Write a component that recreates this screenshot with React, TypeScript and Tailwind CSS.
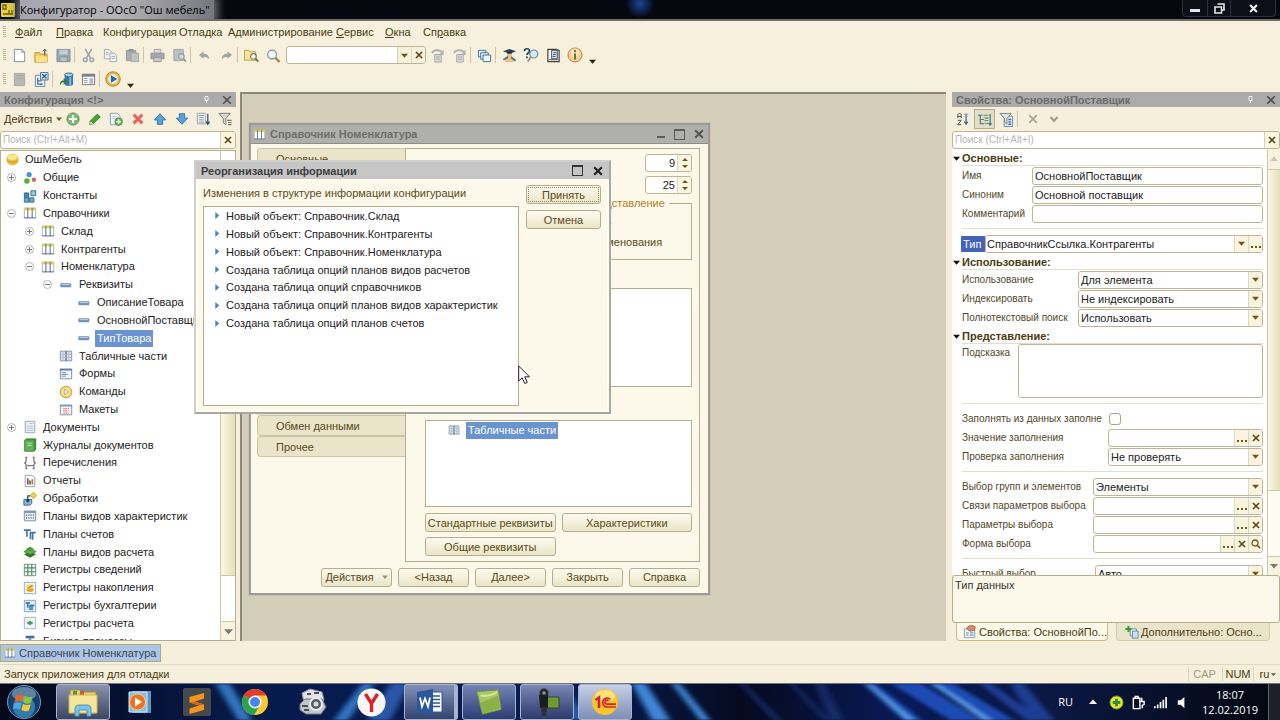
import React from 'react';

type Kids = { children?: React.ReactNode };

function Svg({ s = 16, vb = '0 0 16 16', children }: { s?: number; vb?: string } & Kids) {
  return (
    <svg width={s} height={s} viewBox={vb} fill="none" aria-hidden="true" className="shrink-0">
      {children}
    </svg>
  );
}

const Cross = ({ c = '#5a4a12', s = 9, w = 2 }: { c?: string; s?: number; w?: number }) => (
  <Svg s={s} vb="0 0 10 10">
    <path d="M1.2 1.2 8.8 8.8M8.8 1.2 1.2 8.8" stroke={c} strokeWidth={w} />
  </Svg>
);
const Down = ({ c = '#6b5a14', s = 7 }: { c?: string; s?: number }) => (
  <Svg s={s} vb="0 0 8 8">
    <path d="M0 2h8L4 6.500z" fill={c} />
  </Svg>
);

const catalog = (
  <>
    <path d="M1.500 2.500h13v11h-13z" fill="#fff" stroke="#a3abb5" />
    <path d="M1 2h14v3H1z" fill="#d9cf58" />
    <path d="M5.500 2v12M10.500 2v12" stroke="#6c7f9c" strokeWidth="1.300" />
    <path d="M1 13.500h14" stroke="#6c7f9c" />
  </>
);

const icons: Record<string, React.ReactNode> = {
  newDoc: <path d="M2.500 1.500h8l3 3v10h-11zM10.500 1.500v3h3" fill="#fff" stroke="#7d8ea6" />,
  open: (
    <>
      <path d="M1 5h5l1 1.500h7V15H1z" fill="#f2cf5b" stroke="#b98f2b" />
      <path d="M2 9h12v6H2z" fill="#fae28c" />
      <path d="M11.500 8V1.500M9.500 3.500l2-2.200 2 2.200" stroke="#33363c" />
    </>
  ),
  save: (
    <>
      <path d="M1 1.500h14v13H1z" fill="#9ba7ae" stroke="#8594a0" />
      <path d="M3.500 2h9v5h-9z" fill="#c4cdcf" />
      <path d="M4 9.500h8v5H4z" fill="#b8c0bd" stroke="#8594a0" />
    </>
  ),
  cut: (
    <>
      <path d="M4.500 1 10 10.500M11.500 1 6 10.500" stroke="#97a0aa" strokeWidth="1.600" />
      <circle cx="4.500" cy="12.500" r="2" stroke="#97a0aa" strokeWidth="1.500" />
      <circle cx="11.500" cy="12.500" r="2" stroke="#97a0aa" strokeWidth="1.500" />
    </>
  ),
  copy: (
    <>
      <path d="M1.500 1.500h5l2 2v8h-7z" fill="#f4f4ee" stroke="#a0acba" />
      <path d="M7.500 5.500h4.500l2.500 2.500v6.500h-7z" fill="#f4f4ee" stroke="#a0acba" />
      <path d="M3 5h3M3 7h3M9 9h4M9 11h4" stroke="#a0acba" />
    </>
  ),
  paste: (
    <>
      <path d="M1.500 2.500h10v11h-10z" fill="#a9afb1" stroke="#929a9f" />
      <path d="M4 1h5v3H4z" fill="#8b959c" />
      <path d="M6.500 5.500h8v9h-8z" fill="#bfc4c3" stroke="#a0a8ab" />
    </>
  ),
  print: (
    <>
      <path d="M4.500 1.500h7v4h-7z" fill="#ddd" stroke="#a2a6a8" />
      <path d="M1 5.500h14v6H1z" fill="#a5a8aa" stroke="#8f9498" />
      <path d="M4 10h8v4.500H4z" fill="#c9c9c4" stroke="#999" />
    </>
  ),
  preview: (
    <>
      <path d="M2 1.500h10v12H2z" fill="#bbc2c4" stroke="#a0a8ab" />
      <circle cx="10" cy="9" r="3" fill="#d3d8d8" stroke="#929a9f" strokeWidth="1.200" />
      <path d="m12 11.500 3 3" stroke="#929a9f" strokeWidth="2" />
    </>
  ),
  undo: <path d="M2 7.500 7 3.500v2.500c4 0 6 2 6 6-1.500-2-3-2.500-6-2.500v2z" fill="#a4a69e" />,
  redo: <path d="M14 7.500 9 3.500v2.500c-4 0-6 2-6 6 1.500-2 3-2.500 6-2.500v2z" fill="#a4a69e" />,
  findFolder: (
    <>
      <path d="M.5 2.500h5l1 1.500h6v9H.5z" fill="#f7e59a" stroke="#b9a14c" />
      <circle cx="10" cy="9" r="3" fill="#fff" stroke="#806f48" strokeWidth="1.200" />
      <path d="m12.200 11.200 3 3.300" stroke="#806f48" strokeWidth="2" />
    </>
  ),
  find: (
    <>
      <circle cx="6.500" cy="7" r="4.700" fill="#f5f8fc" stroke="#8493aa" strokeWidth="1.400" />
      <path d="m10 10.500 4.500 4.500" stroke="#a8793e" strokeWidth="2.200" />
    </>
  ),
  jump: (
    <>
      <path d="M2 5.500c2-4 8-4 11-1" stroke="#b2b4b1" strokeWidth="2" />
      <path d="M14.500 1.500v6h-5z" fill="#b2b4b1" />
      <path d="M5 7h7v8H5z" fill="#d6d7d3" stroke="#a9adae" />
      <path d="M6.500 9.500h4M6.500 12h4" stroke="#a9adae" />
    </>
  ),
  windows: (
    <>
      <path d="M1.500 2.500h8v7h-8z" fill="#dfeef6" stroke="#3f7193" />
      <path d="M4 5h8v7H4z" fill="#dfeef6" stroke="#3f7193" />
      <path d="M6.500 7.500h8v7h-8z" fill="#f1f8fc" stroke="#3f7193" />
    </>
  ),
  graduate: (
    <>
      <path d="M1 3.500 8 1l7 2.500L8 6z" fill="#26435c" />
      <circle cx="8" cy="6.800" r="2.800" fill="#f0bd8c" />
      <path d="M5 4h6l-1 2H6z" fill="#1c2c3c" />
      <path d="M3 15c0-3 2-5 5-5s5 2 5 5z" fill="#f1c277" />
      <path d="m1.500 12.500 5-3M9.500 9.500l5 4" stroke="#4a7398" strokeWidth="2" />
    </>
  ),
  helpFind: (
    <>
      <path d="M1.500 4c0-3 5-3 5 0 0 2-2.500 2-2.500 4M4 9.500v1.800" stroke="#23425f" strokeWidth="1.700" />
      <circle cx="10.800" cy="7" r="4" fill="#d6e9f3" stroke="#6d8ba0" strokeWidth="1.200" />
      <path d="m7.800 10-3 4.500" stroke="#9a9186" strokeWidth="2" />
    </>
  ),
  book: (
    <>
      <path d="M2 1.500h9l3 1v12H2z" fill="#fdf9e8" stroke="#4c423a" strokeWidth="1.300" />
      <path d="M6 2.500h6v9H6z" fill="#d6e4f2" stroke="#34506b" />
      <path d="M8 5h3M7.500 7h3M7 9h3M3 12.500h10" stroke="#34506b" />
    </>
  ),
  info: (
    <>
      <circle cx="8" cy="8" r="7" fill="#f6cf8e" stroke="#b87f50" />
      <circle cx="8" cy="6" r="4.500" fill="#fbe3ba" />
      <path d="M8 6.500v6" stroke="#5c7a2a" strokeWidth="2" />
      <circle cx="8" cy="4" r="1.200" fill="#5c7a2a" />
    </>
  ),
  grayBox: (
    <>
      <path d="M2.500 1.500h11v13h-11z" fill="#b9b9b3" stroke="#a9aba6" />
      <path d="M4 4h8M4 7h8" stroke="#a3a5a0" />
    </>
  ),
  tree: (
    <>
      <path d="M1.500 3.500h10v12h-10z" fill="#eef3f8" stroke="#6b88a8" />
      <path d="M7 .5h8v8H7z" fill="#cfe3f3" stroke="#41749c" />
      <path d="m8.800 2.300 4.500 4.500m0-4.500L8.800 6.800" stroke="#23557e" strokeWidth="1.400" />
      <path d="M4 6v7h4M4 9.500h4" stroke="#3c6fa0" strokeWidth="1.300" />
      <path d="M7 12h2v2H7z" fill="#3c6fa0" />
    </>
  ),
  database: (
    <>
      <path d="M6 3v10c0 2.400 9 2.400 9 0V3z" fill="#3a78aa" />
      <ellipse cx="10.500" cy="3" rx="4.500" ry="2" fill="#a6d0e8" stroke="#2e6690" />
      <path d="M12 5v9.500" stroke="#82b6d8" strokeWidth="2" />
      <path d="M1 15c0-5 1-6 4-6V6.500L9 10l-4 3.500V11c-2 0-3 1-4 4z" fill="#2f7d32" />
    </>
  ),
  form: (
    <>
      <path d="M1.500 2.500h13v11h-13z" fill="#fff" stroke="#6f7680" />
      <path d="M1 2h14v3H1z" fill="#7a828c" />
      <path d="M3 7h4M3 9h4M3 11h4" stroke="#8b929c" />
      <path d="M9 6.500h4v6H9z" fill="#aeb9c8" />
    </>
  ),
  play: (
    <>
      <circle cx="8" cy="8" r="7.200" fill="#efb63a" stroke="#b48522" />
      <circle cx="8" cy="8" r="5" fill="#dcebf4" />
      <path d="M6 4.200v7.600L12.300 8z" fill="#2c6a97" />
    </>
  ),
  add: (
    <>
      <circle cx="8" cy="8" r="7" fill="#7cbd72" stroke="#5b8e58" />
      <path d="M8 3.500v9M3.500 8h9" stroke="#fff" strokeWidth="2.400" />
    </>
  ),
  pencil: (
    <>
      <path d="m2.500 10.500 8-8 3.500 3-8 8-4 .7z" fill="#3fa535" stroke="#247e1d" />
      <path d="m3 10.500 3 3-4 .8z" fill="#f0d9a8" />
    </>
  ),
  addDoc: (
    <>
      <path d="M1.500 1.500h8l3 3v10h-11z" fill="#f4f8fb" stroke="#7d97b0" />
      <path d="M3.500 5h6M3.500 7.500h4" stroke="#a9bccd" />
      <circle cx="11" cy="11" r="4.300" fill="#70b567" stroke="#4c8a48" />
      <path d="M11 8.500v5M8.500 11h5" stroke="#fff" strokeWidth="1.500" />
    </>
  ),
  del: <path d="m3 3 10 10M13 3 3 13" stroke="#e8635a" strokeWidth="3.400" />,
  up: <path d="M8 2 14.500 9H11v5H5V9H1.500z" fill="#57a3e0" stroke="#2f6ea8" />,
  down: <path d="M8 14 1.500 7H5V2h6v5h3.500z" fill="#57a3e0" stroke="#2f6ea8" />,
  sort: (
    <>
      <path d="M1.500 1.500h9v12h-9z" fill="#fff" stroke="#8799b0" />
      <path d="M3 4h6M3 6.500h6M3 9h6M3 11.500h6" stroke="#6c7c93" />
      <path d="M13.500 2v11M11.500 11l2 3 2-3" stroke="#20407a" strokeWidth="1.300" />
    </>
  ),
  filter: (
    <>
      <path d="M1 1.500h13L9 7.500v7l-3-2V7.500z" fill="#d7d7d0" stroke="#76766e" />
      <path d="M10.500 9.500h5M11.500 12h4M11.500 14.500h4" stroke="#76766e" strokeWidth="1.300" />
    </>
  ),
  root: (
    <>
      <circle cx="8" cy="8" r="6.500" fill="#f0bd35" />
      <ellipse cx="8" cy="5.500" rx="5" ry="3.200" fill="#fbe78e" />
      <path d="M2 9.500c2 1.500 10 1.500 12 0" stroke="#c9902a" />
    </>
  ),
  common: (
    <>
      <circle cx="7" cy="4" r="3" fill="#4b94d6" />
      <circle cx="4.500" cy="11.500" r="3.200" fill="#5cae3c" />
      <circle cx="12.500" cy="10" r="2.600" fill="#c0726a" />
    </>
  ),
  constants: (
    <>
      <path d="M1.500 4.500h5v5h-5z" fill="#4686b5" stroke="#2e6489" />
      <path d="M1.500 10h5v5h-5zM7.500 10h5v5h-5z" fill="#71a9cf" stroke="#2e6489" />
      <path d="M9 2h5.500v5.500H9z" fill="#9cc8e3" stroke="#2e6489" />
    </>
  ),
  catalog,
  attr: (
    <>
      <rect x="1.500" y="6" width="12.500" height="4.500" rx="1" fill="#6f93ba" />
      <path d="M3 7.500h9.500" stroke="#c6d8ea" />
    </>
  ),
  tabular: (
    <>
      <path d="M1.500 2.500h13v11h-13z" fill="#dfe6f0" stroke="#7e8897" />
      <path d="M8 2.500v11" stroke="#56657c" strokeWidth="1.500" />
      <path d="M4.700 3v10M11.300 3v10M2 6h12M2 9.500h12" stroke="#aeb9c9" />
    </>
  ),
  forms: (
    <>
      <path d="M1.500 2.500h13v11h-13z" fill="#eef3f9" stroke="#71839c" />
      <path d="M1 2h14v2H1z" fill="#5d7da6" />
      <path d="M3 6.500h5M3 8.500h7M3 10.500h5" stroke="#70839d" />
    </>
  ),
  command: (
    <>
      <circle cx="8" cy="8" r="6.700" fill="#f3d472" stroke="#c09a33" />
      <circle cx="8" cy="8" r="4.500" fill="#f8e8b0" />
      <path d="M6.200 4.700v6.600L11.500 8z" fill="#fffbe8" stroke="#d6aa3e" />
    </>
  ),
  layout: (
    <>
      <path d="M1.500 2.500h13v11h-13z" fill="#f4f6fa" stroke="#7b8a9f" />
      <path d="M1 2h14v2H1z" fill="#7d9bc2" />
      <path d="M5 6.500h6M5 9h6M5 11.500h6" stroke="#d96a62" strokeDasharray="1.500 1" strokeWidth="1.500" />
    </>
  ),
  doc: (
    <>
      <path d="M2.500 1.500h11v13h-11z" fill="#edf1f6" stroke="#94a0b1" />
      <path d="M7 4h5M4 7h8M4 9.500h8M4 12h8" stroke="#b4bfce" />
    </>
  ),
  journal: (
    <>
      <path d="M2 2.500 4 1h10.500v12l-2 2H2z" fill="#3f9a35" stroke="#2c7426" />
      <path d="M2.500 3h9.500v11.500H2.500z" fill="#62b552" />
      <path d="M5 6h5M5 8.500h5" stroke="#c3e6ba" />
    </>
  ),
  enumer: (
    <>
      <path d="M5 1.500H3.500v5L2 8l1.500 1.500v5H5M11 1.500h1.500v5L14 8l-1.500 1.500v5H11" stroke="#5b5b5b" strokeWidth="1.200" />
      <path d="M5 11h1.500M7.300 11h1.500M9.600 11h1.500" stroke="#333" strokeWidth="1.500" />
    </>
  ),
  report: (
    <>
      <path d="M2.500 1.500h8l3 3v10h-11z" fill="#fafcfe" stroke="#8a96a8" />
      <path d="M5.500 5v7" stroke="#b9483f" strokeWidth="2" />
      <path d="M8 7.500V12" stroke="#3f8b45" strokeWidth="2" />
      <path d="M10.700 6v6" stroke="#d06a5f" strokeWidth="2" />
    </>
  ),
  processing: (
    <>
      <path d="m8 4 4-3.500L15.500 4 12 7.500z" fill="#f1d43b" stroke="#b89a25" />
      <path d="M1 8.500h9v4.500l-2 2H1z" fill="#8cb8da" stroke="#315d85" />
      <path d="M8 4.500H5.500v6M3.700 9l1.800 2.300L7.300 9" stroke="#1f3d5c" strokeWidth="1.400" />
    </>
  ),
  charKinds: (
    <>
      <path d="M1.500 2.500h13v11h-13z" fill="#e7eef6" stroke="#7388a2" />
      <path d="M1 2h14v2.500H1z" fill="#7b97b8" />
      <path d="M4 6v6M6.700 6v6M9.300 6v6M12 6v6" stroke="#6d8cab" strokeDasharray="2 1" strokeWidth="1.300" />
    </>
  ),
  accounts: <path d="M1 3.500h8M4.500 3.500V11M8.500 14V6.500h6M11 6.500v8" stroke="#3f77a8" strokeWidth="1.900" />,
  calcKinds: (
    <>
      <path d="m1 10.500 7-3 7 3-7 4z" fill="#2c7426" />
      <path d="m1 7.500 7-3 7 3-7 3.500z" fill="#69ae4c" stroke="#3b8130" />
      <path d="m3 4.500 5-2.500 5 2.500L8 7z" fill="#4c9a3b" />
    </>
  ),
  infoReg: (
    <>
      <path d="M1.500 1.500h13v13h-13z" fill="#f0f6f2" stroke="#5f8a78" />
      <path d="M1.500 5.500h13M1.500 10h13M5.500 1.500v13M10 1.500v13" stroke="#4f8a6c" strokeWidth="1.300" />
    </>
  ),
  accumReg: (
    <>
      <path d="M1.500 1.500h13v13h-13z" fill="#eef4f8" stroke="#8aa5b9" />
      <ellipse cx="8" cy="10" rx="4" ry="2.500" fill="#e3a52b" />
      <ellipse cx="8" cy="6.500" rx="4" ry="2.500" fill="#f4d44e" />
      <path d="m6 8 5-3" stroke="#b8493a" />
    </>
  ),
  bookReg: (
    <>
      <path d="M1.500 1.500h13v13h-13z" fill="#dbe9f5" stroke="#7d9fbd" />
      <path d="M3 4.500h5M5.500 4.500V10M8 12.500v-5h5M10.300 7.500v5" stroke="#2d6b9e" strokeWidth="1.600" />
    </>
  ),
  calcReg: (
    <>
      <path d="M1.500 1.500h13v13h-13z" fill="#edf3f8" stroke="#9aaec2" />
      <path d="m4 8 4-2.500L12 8l-4 2.500z" fill="#4d9a44" />
    </>
  ),
  process: (
    <>
      <path d="M3 2h10v3H3z" fill="#3f6fa2" />
      <path d="M8 5 4 11h8z" fill="#9fc0dd" stroke="#47759f" />
      <circle cx="8" cy="12" r="3" fill="#e5a674" />
    </>
  ),
  az: (
    <>
      <path d="M2 7V3.500C2 1 6 1 6 3.500V7M2 5h4M2 9.500h4l-4 5h4" stroke="#4d4d4d" strokeWidth="1.100" />
      <path d="M11.500 2v11M9.500 11l2 3 2-3" stroke="#2e6a8f" strokeWidth="1.300" />
      <path d="M9 2.500h5M9.500 5h4" stroke="#7fa4bb" />
    </>
  ),
  group: (
    <>
      <path d="M1 3.500h5M3.500 4v9M3.500 8h4M3.500 12.500h4" stroke="#467a8b" strokeWidth="1.200" />
      <path d="M7 3.500h5M8 6.500h4M8 9h4M8 12h4" stroke="#5d8f6a" strokeWidth="1.200" />
      <path d="M14 2v12M12.500 12l1.500 2 1.500-2" stroke="#2c6a9a" strokeWidth="1.200" />
    </>
  ),
  filterList: (
    <>
      <path d="M5.500 4.500h9v11h-9z" fill="#e9f0f7" stroke="#6c86a6" />
      <path d="M1 1.500h12L8.500 7v6L6 11V7z" fill="#dfe4e6" stroke="#7a8288" />
      <path d="M10 8h3M10 10.500h3M10 13h3" stroke="#39689c" strokeWidth="1.500" />
    </>
  ),
  propsCard: (
    <>
      <path d="M1.500 4.500h12v10h-12z" fill="#eef4fa" stroke="#7d97b3" />
      <path d="M3.500 9h3M8 9h4M3.500 11.500h3M8 11.500h4" stroke="#4b78a8" />
      <path d="M4 4c2-4 7-4 10-2l-1 4-5 1z" fill="#d98a6c" stroke="#a55b42" />
    </>
  ),
  extra: (
    <>
      <path d="M6 4.500h7v8H6z" fill="#eef4fa" stroke="#5d84a8" />
      <path d="M8.500 7h6.500v8H8.500z" fill="#cfe1f0" stroke="#5d84a8" />
      <path d="M4 1v7M.5 4.500h7" stroke="#379a37" strokeWidth="2.200" />
    </>
  ),
};

const Icon = ({ n, s = 14 }: { n: string; s?: number }) => <Svg s={s}>{icons[n]}</Svg>;

function ToolBtn({ n, label, s = 15 }: { n: string; label: string; s?: number }) {
  return (
    <button type="button" aria-label={label} className="flex h-5 w-[22px] shrink-0 items-center justify-center">
      <Icon n={n} s={s} />
    </button>
  );
}
const Sep = () => <span className="h-4 w-[3px] shrink-0 border-l border-[#cfc7a6]" />;
const Grip = () => (
  <span className="flex w-2 shrink-0 justify-center">
    <span className="h-3 w-[3px] bg-[repeating-linear-gradient(180deg,#b9b294_0px,#b9b294_1px,transparent_1px,transparent_2px)]" />
  </span>
);

function Btn({ children, className = '' }: Kids & { className?: string }) {
  return (
    <button
      type="button"
      className={
        'flex h-[19px] items-center justify-center rounded-[3px] border border-[#b5ae8e] bg-linear-to-b from-[#fdfbf0] to-[#ebe5c6] whitespace-nowrap text-[#5a4a18] ' +
        className
      }
    >
      {children}
    </button>
  );
}

/* ---------- menu and tool bars ---------- */

const menu: [string, string, string, string][] = [
  ['', 'Ф', 'айл', 'ml-[7px] w-[41px]'],
  ['', 'П', 'равка', 'w-[47px]'],
  ['Конфигурация', '', '', 'w-[76px]'],
  ['Отладка', '', '', 'w-[49px]'],
  ['Администрирование', '', '', 'w-[108px]'],
  ['', 'С', 'ервис', 'w-[49px]'],
  ['', 'О', 'кна', 'w-[38px]'],
  ['Сп', 'р', 'авка', 'w-[60px]'],
];

function Bars() {
  return (
    <header className="h-[71px] shrink-0 bg-[#f6f0dc] text-[#4a3c10]">
      <nav className="flex h-[22px] items-center">
        <Grip />
        {menu.map(([a, u, b, w]) => (
          <button key={a + u + b} type="button" className={'text-left whitespace-nowrap ' + w}>
            {a}
            <u>{u}</u>
            {b}
          </button>
        ))}
      </nav>
      <div className="flex h-6 items-center">
        <Grip />
        <ToolBtn n="newDoc" label="Новый" />
        <ToolBtn n="open" label="Открыть" />
        <ToolBtn n="save" label="Сохранить" />
        <Sep />
        <ToolBtn n="cut" label="Вырезать" />
        <ToolBtn n="copy" label="Копировать" />
        <ToolBtn n="paste" label="Вставить" />
        <Sep />
        <ToolBtn n="print" label="Печать" />
        <ToolBtn n="preview" label="Просмотр" />
        <Sep />
        <ToolBtn n="undo" label="Отменить" />
        <ToolBtn n="redo" label="Вернуть" />
        <Sep />
        <ToolBtn n="findFolder" label="Глобальный поиск" />
        <ToolBtn n="find" label="Найти" />
        <div className="ml-0.5 flex h-[18px] w-[140px] overflow-hidden rounded-[3px] border border-[#bdb596] bg-white">
          <input aria-label="Строка поиска" className="min-w-0 flex-1 px-1 outline-none" />
          <button type="button" aria-label="История" className="flex w-[14px] items-center justify-center border-l border-[#d8d1b4] bg-[#f6f1da]">
            <Down />
          </button>
          <button type="button" aria-label="Очистить" className="flex w-[14px] items-center justify-center border-l border-[#e2dcc4] bg-[#f6f1da]">
            <Cross s={8} />
          </button>
        </div>
        <ToolBtn n="jump" label="Назад" />
        <ToolBtn n="jump" label="Вперед" />
        <Sep />
        <ToolBtn n="windows" label="Окна" />
        <Sep />
        <ToolBtn n="graduate" label="Синтакс-помощник" />
        <ToolBtn n="helpFind" label="Поиск в справке" s={16} />
        <ToolBtn n="book" label="Содержание" />
        <ToolBtn n="info" label="О программе" s={16} />
        <span className="mt-3 ml-[3px]">
          <Down c="#2b2408" />
        </span>
      </div>
      <div className="flex h-6 items-center">
        <Grip />
        <ToolBtn n="grayBox" label="Открыть конфигурацию" />
        <ToolBtn n="tree" label="Дерево" />
        <Sep />
        <ToolBtn n="database" label="Обновить базу" />
        <ToolBtn n="form" label="Окно" />
        <Sep />
        <ToolBtn n="play" label="Начать отладку" s={16} />
        <span className="mt-3 ml-[3px]">
          <Down c="#2b2408" />
        </span>
      </div>
    </header>
  );
}

function PanelTitle({ children }: Kids) {
  return (
    <div className="flex h-[15px] shrink-0 items-center bg-[#acabab] pr-1 pl-1 font-bold text-[#6a6a6a]">
      <h2 className="flex-1 truncate">{children}</h2>
      <button type="button" aria-label="Закрепить" className="mr-3">
        <Svg s={7} vb="0 0 7 7">
          <path d="M2 .5h3v4H2zM3.500 4v3" stroke="#f1f1f1" />
        </Svg>
      </button>
      <button type="button" aria-label="Закрыть панель">
        <Cross c="#4f4f4f" s={10} w={1.6} />
      </button>
    </div>
  );
}

function Search({ hint, label }: { hint: string; label: string }) {
  return (
    <div className="flex h-[18px] shrink-0 overflow-hidden rounded-[3px] border border-[#bdb596] bg-white">
      <input aria-label={label} placeholder={hint} className="min-w-0 flex-1 pl-0.5 text-[10px] outline-none placeholder:text-[#b5b5b5]" />
      <button type="button" aria-label="Очистить поиск" className="flex w-[15px] items-center justify-center border-l border-[#d8d1b4] bg-[#faf5e2]">
        <Cross s={8} />
      </button>
    </div>
  );
}

/* ---------- configuration tree ---------- */

type Node = { t: string; i: string; d: number; x?: '+' | '-'; sel?: boolean };
const nodes: Node[] = [
  { t: 'ОшМебель', i: 'root', d: -1 },
  { t: 'Общие', i: 'common', d: 0, x: '+' },
  { t: 'Константы', i: 'constants', d: 0 },
  { t: 'Справочники', i: 'catalog', d: 0, x: '-' },
  { t: 'Склад', i: 'catalog', d: 1, x: '+' },
  { t: 'Контрагенты', i: 'catalog', d: 1, x: '+' },
  { t: 'Номенклатура', i: 'catalog', d: 1, x: '-' },
  { t: 'Реквизиты', i: 'attr', d: 2, x: '-' },
  { t: 'ОписаниеТовара', i: 'attr', d: 3 },
  { t: 'ОсновнойПоставщик', i: 'attr', d: 3 },
  { t: 'ТипТовара', i: 'attr', d: 3, sel: true },
  { t: 'Табличные части', i: 'tabular', d: 2 },
  { t: 'Формы', i: 'forms', d: 2 },
  { t: 'Команды', i: 'command', d: 2 },
  { t: 'Макеты', i: 'layout', d: 2 },
  { t: 'Документы', i: 'doc', d: 0, x: '+' },
  { t: 'Журналы документов', i: 'journal', d: 0 },
  { t: 'Перечисления', i: 'enumer', d: 0 },
  { t: 'Отчеты', i: 'report', d: 0 },
  { t: 'Обработки', i: 'processing', d: 0 },
  { t: 'Планы видов характеристик', i: 'charKinds', d: 0 },
  { t: 'Планы счетов', i: 'accounts', d: 0 },
  { t: 'Планы видов расчета', i: 'calcKinds', d: 0 },
  { t: 'Регистры сведений', i: 'infoReg', d: 0 },
  { t: 'Регистры накопления', i: 'accumReg', d: 0 },
  { t: 'Регистры бухгалтерии', i: 'bookReg', d: 0 },
  { t: 'Регистры расчета', i: 'calcReg', d: 0 },
  { t: 'Бизнес-процессы', i: 'process', d: 0 },
];
const indent: Record<string, string> = { '-1': 'pl-1', '0': 'pl-1', '1': 'pl-[22px]', '2': 'pl-10', '3': 'pl-[58px]' };

function TreeRow({ n }: { n: Node }) {
  return (
    <li className={'flex min-h-0 flex-1 basis-0 items-center ' + indent[String(n.d)]}>
      {n.d >= 0 && (
        <span className="flex w-[18px] shrink-0 items-center pl-0.5">
          {n.x && (
            <button type="button" aria-label={n.x === '+' ? 'Развернуть' : 'Свернуть'}>
              <Svg s={9} vb="0 0 9 9">
                <circle cx="4.500" cy="4.500" r="4" fill="#fff" stroke="#b2b2b2" />
                <path d={n.x === '+' ? 'M2 4.500h5M4.500 2v5' : 'M2 4.500h5'} stroke="#777" />
              </Svg>
            </button>
          )}
        </span>
      )}
      <span className="flex w-[18px] shrink-0 items-center">
        <Icon n={n.i} s={n.d < 0 ? 15 : 14} />
      </span>
      <span className={'px-0.5 leading-[17px] whitespace-nowrap ' + (n.sel ? 'bg-[#6a94cf] text-white' : 'text-[#222]')}>{n.t}</span>
    </li>
  );
}

function LeftPanel() {
  return (
    <aside className="flex w-[236px] shrink-0 flex-col">
      <PanelTitle>Конфигурация &lt;!&gt;</PanelTitle>
      <div className="flex h-6 shrink-0 items-center text-[#4a3c10]">
        <button type="button" className="flex w-[62px] items-center gap-1 pl-1">
          Действия <Down s={6} />
        </button>
        {['add', 'pencil', 'addDoc', 'del', 'up', 'down', 'sort', 'filter'].map((i) => (
          <button key={i} type="button" aria-label={i} className="flex flex-1 justify-center">
            <Icon n={i} />
          </button>
        ))}
      </div>
      <Search hint="Поиск (Ctrl+Alt+M)" label="Поиск по конфигурации" />
      <div className="mt-px flex min-h-0 flex-1 border border-[#b5ae8e] bg-white">
        <div className="min-w-0 flex-1 overflow-hidden">
          <ul className="flex h-[499px] flex-col">
            {nodes.map((n) => (
              <TreeRow key={n.t} n={n} />
            ))}
          </ul>
        </div>
        <div className="flex w-[15px] shrink-0 flex-col border-l border-[#cfc8a8]">
          <span className="h-3" />
          <span className="min-h-0 flex-1 border-y border-[#cfc8a8] bg-linear-to-r from-[#fbf8e4] to-[#e6dfba]" />
          <span className="h-[45px]" />
          <span className="flex h-[19px] items-center justify-center border-t border-[#cfc8a8] bg-[#f8f3de]">
            <Down c="#7a7a72" s={9} />
          </span>
        </div>
      </div>
    </aside>
  );
}

/* ---------- document window ---------- */

function Spin({ v, label }: { v: string; label: string }) {
  return (
    <div className="flex h-[18px] w-[47px] overflow-hidden rounded-[3px] border border-[#bdb596] bg-white">
      <input aria-label={label} defaultValue={v} className="min-w-0 flex-1 pr-0.5 text-right text-[#222] outline-none" />
      <span className="flex w-[14px] items-center justify-center border-l border-[#ded8bd] bg-[#faf6e4]">
        <Svg s={12} vb="0 0 12 12">
          <path d="M3 4h6L6 1zM3 8h6L6 11z" fill="#6b5a14" />
        </Svg>
      </span>
    </div>
  );
}

const SideTab = ({ children }: Kids) => (
  <button type="button" className="flex h-[21px] items-center rounded-l-[4px] border border-r-0 border-[#cdc6a2] bg-[#e9e4ca] pl-[18px] text-[#5a4a18]">
    {children}
  </button>
);

function CatalogWindow() {
  return (
    <section className="absolute top-[29px] left-[7px] flex h-[472px] w-[461px] flex-col border-2 border-[#9d9a98] bg-[#fcf9ea] outline outline-[#c6c2b6]">
      <div className="flex h-[19px] shrink-0 items-center border-b border-[#8d8d8d] bg-[#afb0ac] pr-1 pl-0.5 font-bold text-[#6e6e6c]">
        <Icon n="catalog" s={13} />
        <h2 className="flex-1 pl-1">Справочник Номенклатура</h2>
        <button type="button" aria-label="Свернуть окно" className="mr-[9px] h-2 w-2 border-b-2 border-[#5c5c5c]" />
        <button type="button" aria-label="Развернуть окно" className="mr-[9px] h-[11px] w-[11px] border border-t-2 border-[#5c5c5c]" />
        <button type="button" aria-label="Закрыть окно">
          <Cross c="#555" s={10} />
        </button>
      </div>
      <div className="flex min-h-0 flex-1 pt-1 pr-2 pl-1.5">
        <nav className="flex w-[148px] shrink-0 flex-col">
          <SideTab>Основные</SideTab>
          <span className="h-[246px] border-l border-[#cdc6a2] bg-[#e9e4ca]" />
          <SideTab>Обмен данными</SideTab>
          <SideTab>Прочее</SideTab>
        </nav>
        <div className="flex min-w-0 flex-1 flex-col border border-[#b5ae8e] pt-[5px] pr-[7px] pb-[5px] pl-[19px]">
          <div className="flex flex-col items-end gap-1">
            <Spin v="9" label="Длина кода" />
            <Spin v="25" label="Длина наименования" />
          </div>
          <fieldset className="mt-0.5 h-16 border border-[#b5ae8e] pl-[124px] text-[#5a4a18]">
            <legend className="-ml-5 px-1 whitespace-nowrap text-[#b97b28]">Основное представление</legend>
            <p className="pt-0.5 leading-[16px] whitespace-nowrap">В виде кода</p>
            <p className="pt-1.5 leading-[16px] whitespace-nowrap">В виде наименования</p>
          </fieldset>
          <div className="mt-7 h-[99px] shrink-0 border border-[#b5ae8e] bg-white" />
          <div className="mt-[33px] min-h-0 flex-1 border border-[#b5ae8e] bg-white">
            <div className="flex h-[18px] items-center gap-1.5 pl-[22px]">
              <Icon n="tabular" s={12} />
              <span className="bg-[#6a94cf] px-0.5 leading-[17px] text-white">Табличные части</span>
            </div>
          </div>
          <div className="mt-1.5 grid grid-cols-2 gap-x-1.5 gap-y-[5px]">
            <Btn>Стандартные реквизиты</Btn>
            <Btn>Характеристики</Btn>
            <Btn>Общие реквизиты</Btn>
          </div>
        </div>
      </div>
      <div className="flex h-[31px] shrink-0 items-center justify-end gap-1.5 pr-2 pb-px">
        <Btn className="w-[71px] gap-2">
          Действия <Down c="#9a9274" s={6} />
        </Btn>
        <Btn className="w-[71px]">&lt;Назад</Btn>
        <Btn className="w-[71px]">Далее&gt;</Btn>
        <Btn className="w-[71px]">Закрыть</Btn>
        <Btn className="w-[71px]">Справка</Btn>
      </div>
    </section>
  );
}

/* ---------- modal dialog ---------- */

const changes = [
  'Новый объект: Справочник.Склад',
  'Новый объект: Справочник.Контрагенты',
  'Новый объект: Справочник.Номенклатура',
  'Создана таблица опций планов видов расчетов',
  'Создана таблица опций справочников',
  'Создана таблица опций планов видов характеристик',
  'Создана таблица опций планов счетов',
];

function ReorgDialog() {
  return (
    <section
      role="dialog"
      aria-label="Реорганизация информации"
      className="absolute top-40 left-[194px] flex h-[254px] w-[417px] flex-col border-2 border-[#a8a8a6] border-t-[#cfcfcd] border-l-[#cfcfcd] bg-[#fcf9ea]"
    >
      <div className="flex h-[17px] shrink-0 items-center bg-[#c6c6c6] pr-1.5 pl-[5px] font-bold text-[#3d3d3d]">
        <h2 className="flex-1">Реорганизация информации</h2>
        <button type="button" aria-label="Развернуть" className="mr-2.5 h-[11px] w-[11px] border border-t-2 border-[#333]" />
        <button type="button" aria-label="Закрыть">
          <Cross c="#222" s={10} w={2.2} />
        </button>
      </div>
      <div className="flex min-h-0 flex-1 gap-[7px] border-2 border-[#fffef2] pr-1.5 pb-[3px] pl-[5px]">
        <div className="flex w-[316px] flex-col">
          <p className="flex h-[25px] items-center pb-0.5 text-[#5a4a18]">Изменения в структуре информации конфигурации</p>
          <div className="mb-px min-h-0 flex-1 border border-[#b5ae8e] bg-white">
            <ul className="flex h-[125px] flex-col">
              {changes.map((c) => (
                <li key={c} className="flex min-h-0 flex-1 basis-0 items-center pl-2.5 text-[#222]">
                  <button type="button" aria-label="Подробнее" className="w-3">
                    <Svg s={7} vb="0 0 8 8">
                      <path d="M1.500 0 6 4l-4.500 4z" fill="#5284aa" />
                    </Svg>
                  </button>
                  <span className="whitespace-nowrap">{c}</span>
                </li>
              ))}
            </ul>
          </div>
        </div>
        <div className="flex min-w-0 flex-1 flex-col gap-1.5 pt-1">
          <Btn className="border-[#8e8765] outline-1 -outline-offset-3 outline-dotted outline-[#8e8765]">Принять</Btn>
          <Btn>Отмена</Btn>
        </div>
      </div>
    </section>
  );
}

/* ---------- properties ---------- */

const box = 'flex h-[18px] min-w-0 overflow-hidden rounded-[3px] border border-[#bdb596] bg-white ';
const cell = 'flex w-[14px] shrink-0 items-center justify-center border-l border-[#ded8bd] bg-[#f8f4e0] ';

const Dots = () => (
  <button type="button" aria-label="Выбрать" className={cell + 'pt-1'}>
    <Svg s={10} vb="0 0 10 10">
      <path d="M0 5h2v2H0zM4 5h2v2H4zM8 5h2v2H8z" fill="#6b5a14" />
    </Svg>
  </button>
);

const Section = ({ children }: Kids) => (
  <h3 className="flex h-[17px] items-center pt-0.5 font-bold text-[#4a3c10]">
    <span className="w-[9px]">
      <Down c="#111" />
    </span>
    <span className="flex-1 border-b border-[#e2ddcc] leading-[14px]">{children}</span>
  </h3>
);
const Line = () => (
  <div className="flex h-[11px] items-center pl-[9px]">
    <span className="h-px flex-1 bg-[#e2ddcc]" />
  </div>
);

const propLabel = 'shrink-0 text-[10px] whitespace-nowrap text-[#51462a] ';

function Prop({ id, label, w, value = '', kind = 'text', extra = '' }: { id: string; label: string; w: string; value?: string; kind?: 'text' | 'select' | 'check'; extra?: string }) {
  return (
    <div className="flex h-[19px] items-center pl-[9px]">
      <label htmlFor={id} className={propLabel + w}>
        {label}
      </label>
      {kind === 'check' ? (
        <input id={id} type="checkbox" className="h-3 w-3 appearance-none rounded-[3px] border border-[#aaa389] bg-white" />
      ) : (
        <div className={box + 'flex-1'}>
          {kind === 'select' ? (
            <select id={id} defaultValue={value} className="min-w-0 flex-1 appearance-none pl-0.5 text-[#222] outline-none">
              <option>{value}</option>
            </select>
          ) : (
            <input id={id} defaultValue={value} className="min-w-0 flex-1 pl-0.5 text-[#222] outline-none" />
          )}
          {kind === 'select' && (
            <span className={cell}>
              <Down />
            </span>
          )}
          {extra.includes('.') && <Dots />}
          {extra.includes('x') && (
            <button type="button" aria-label="Очистить" className={cell}>
              <Cross s={8} />
            </button>
          )}
          {extra.includes('q') && (
            <button type="button" aria-label="Открыть" className={cell}>
              <Svg s={10} vb="0 0 10 10">
                <circle cx="4" cy="4" r="3" stroke="#6b5a14" strokeWidth="1.300" />
                <path d="m6.200 6.200 3 3" stroke="#6b5a14" strokeWidth="1.500" />
              </Svg>
            </button>
          )}
        </div>
      )}
    </div>
  );
}

function RightPanel() {
  return (
    <aside className="flex w-[328px] shrink-0 flex-col">
      <PanelTitle>Свойства: ОсновнойПоставщик</PanelTitle>
      <div className="flex h-6 shrink-0 items-center">
        <ToolBtn n="az" label="По алфавиту" s={14} />
        <button type="button" aria-label="По категориям" className="flex h-5 w-[21px] items-center justify-center border border-[#b5ae8e] bg-[#e2dfc4]">
          <Icon n="group" s={15} />
        </button>
        <ToolBtn n="filterList" label="Только важные" />
        <Sep />
        <button type="button" aria-label="Отменить изменение" className="mr-[11px] ml-2">
          <Cross c="#a9a596" s={10} w={1.8} />
        </button>
        <button type="button" aria-label="Применить">
          <Svg s={10} vb="0 0 10 10">
            <path d="m1.500 3 3.500 4 3.500-4" stroke="#a39d80" strokeWidth="2" />
          </Svg>
        </button>
      </div>
      <Search hint="Поиск (Ctrl+Alt+I)" label="Поиск свойства" />
      <div className="flex min-h-0 flex-1 bg-white">
        <div className="min-w-0 flex-1 overflow-hidden pr-1 pl-px">
          <Section>Основные:</Section>
          <Prop id="name" label="Имя" w="w-[70px]" value="ОсновнойПоставщик" />
          <Prop id="syn" label="Синоним" w="w-[70px]" value="Основной поставщик" />
          <Prop id="com" label="Комментарий" w="w-[70px]" />
          <Line />
          <div className="flex h-[19px] items-center pl-2">
            <label htmlFor="type" className="w-6 shrink-0 bg-[#4463b8] pl-0.5 leading-[16px] text-white">
              Тип
            </label>
            <div className={box + 'flex-1'}>
              <input id="type" defaultValue="СправочникСсылка.Контрагенты" className="min-w-0 flex-1 pl-px text-[#222] outline-none" />
              <button type="button" aria-label="Список" className={cell}>
                <Down />
              </button>
              <Dots />
            </div>
          </div>
          <Section>Использование:</Section>
          <Prop id="use" label="Использование" w="w-[116px]" value="Для элемента" kind="select" />
          <Prop id="idx" label="Индексировать" w="w-[116px]" value="Не индексировать" kind="select" />
          <Prop id="fts" label="Полнотекстовый поиск" w="w-[116px]" value="Использовать" kind="select" />
          <Section>Представление:</Section>
          <div className="flex h-[54px] pl-[9px]">
            <label htmlFor="tip" className={propLabel + 'w-14 pt-0.5'}>
              Подсказка
            </label>
            <textarea id="tip" className="min-w-0 flex-1 resize-none rounded-[3px] border border-[#bdb596] outline-none" />
          </div>
          <Line />
          <Prop id="fill" label="Заполнять из данных заполне" w="w-[147px]" kind="check" />
          <Prop id="val" label="Значение заполнения" w="w-[146px]" extra=".x" />
          <Prop id="chk" label="Проверка заполнения" w="w-[146px]" value="Не проверять" kind="select" />
          <Line />
          <Prop id="grp" label="Выбор групп и элементов" w="w-[131px]" value="Элементы" kind="select" />
          <Prop id="lnk" label="Связи параметров выбора" w="w-[131px]" extra=".x" />
          <Prop id="par" label="Параметры выбора" w="w-[131px]" extra=".x" />
          <Prop id="frm" label="Форма выбора" w="w-[131px]" extra=".xq" />
          <Line />
          <Prop id="quick" label="Быстрый выбор" w="w-[133px]" value="Авто" kind="select" />
        </div>
        <div className="flex w-[13px] shrink-0 flex-col border-l border-[#cfc8a8] bg-[#fdfbf2]">
          <span className="flex h-5 items-center justify-center bg-[#f8f3de]">
            <Svg s={8} vb="0 0 8 8">
              <path d="M0 6h8L4 1.500z" fill="#cbc6b0" />
            </Svg>
          </span>
          <span className="min-h-0 flex-1 border-y border-[#cfc8a8] bg-linear-to-r from-[#fbf8e4] to-[#e6dfba]" />
          <span className="h-[65px]" />
          <span className="flex h-[19px] items-center justify-center border-t border-[#cfc8a8] bg-[#f8f3de]">
            <Down c="#7a7a72" s={8} />
          </span>
        </div>
      </div>
      <p className="h-12 shrink-0 rounded-[3px] border border-[#b5ae8e] bg-[#fcf9ea] px-0.5 pt-0.5 text-[#333]">Тип данных</p>
      <div className="flex h-[18px] shrink-0 gap-2 pr-2.5 pl-1 text-[#4a3c10]">
        <button type="button" className="flex min-w-0 flex-1 items-center gap-0.5 rounded-b-[4px] border border-t-0 border-[#cdbb84] bg-[#fcf9ea] pl-1.5 whitespace-nowrap">
          <Icon n="propsCard" />
          Свойства: ОсновнойПо...
        </button>
        <button type="button" className="flex min-w-0 flex-1 items-center gap-0.5 rounded-b-[4px] border border-t-0 border-[#d4cda9] bg-[#eae4c9] pl-2 whitespace-nowrap">
          <Icon n="extra" />
          Дополнительно: Осно...
        </button>
      </div>
    </aside>
  );
}

/* ---------- taskbar ---------- */

const task = 'flex w-[58px] shrink-0 items-center justify-center ';
const active = 'flex h-9 w-[54px] shrink-0 items-center justify-center rounded-[3px] border border-[#a8b4cc] ';

function Taskbar() {
  return (
    <footer className="relative h-[37px] shrink-0 overflow-hidden border-t border-[#6e7686] bg-[#050b1e]">
      <svg className="absolute inset-0 h-full w-full" viewBox="0 0 1280 37" preserveAspectRatio="none" aria-hidden="true">
        <defs>
          <filter id="soft" x="-20%" width="140%">
            <feGaussianBlur stdDeviation="3 1" />
          </filter>
          <linearGradient id="night" x1="0" x2="1" y1="0" y2="0">
            <stop offset="0" stopColor="#05091a" />
            <stop offset=".2" stopColor="#071a4c" />
            <stop offset=".45" stopColor="#081c52" />
            <stop offset=".58" stopColor="#050a20" />
            <stop offset=".7" stopColor="#081a55" />
            <stop offset=".83" stopColor="#0a1740" />
            <stop offset="1" stopColor="#04070f" />
          </linearGradient>
        </defs>
        <rect width="1280" height="37" fill="url(#night)" />
        <g filter="url(#soft)">
          <path d="M216 0h14l22 37h-14zM334 37h14l26-37h-12z" fill="#3273c0" />
          <path d="M632 0h14l24 37h-18zM672 0h8l30 37h-10z" fill="#3f86d8" />
          <path d="M390 0h20l-20 37h-22zM545 0h16l30 37h-20z" fill="#2a57a8" />
          <path d="M740 0h5l36 37h-7zM790 0h4l36 37h-6zM830 37h14l-20-37h-8z" fill="#122b66" />
          <path d="M864 0h12l46 37h-18zM892 0h30l58 37h-30zM930 0h24l60 37h-26z" fill="#1f4cb4" />
          <path d="M866 0h4l44 37h-8zM932 0h6l54 37h-9z" fill="#58a0ea" />
          <path d="M980 0h12l50 37h-16zM1010 0h14l30 37h-20z" fill="#1c3d92" />
        </g>
      </svg>
      <div className="relative flex h-full items-center">
        <button type="button" aria-label="Пуск" className="mr-[3px] ml-[7px] flex w-[46px]">
          <Svg s={34} vb="0 0 34 34">
            <circle cx="17" cy="17" r="16.500" fill="#163f6b" stroke="#6f9ab8" />
            <circle cx="17" cy="22" r="11" fill="#3b8fc0" opacity=".75" />
            <ellipse cx="17" cy="9" rx="12" ry="7" fill="#a9c6d8" opacity=".5" />
            <path d="M9 11c3-2 5-1.500 7.500-.3L15 17c-3-1.500-5-1.300-7.500 0z" fill="#e8632a" />
            <path d="M17.700 11.200c3 1.400 5 1.300 7.800.2L24 18c-2.500 1-5 1-7.700-.5z" fill="#8cc63f" />
            <path d="M7.200 18.200c3-1.300 5-1.200 7.500.2L13 24.500c-3-1.300-5-1.200-7.300 0z" fill="#4aa8e8" />
            <path d="M16 19c3 1.400 5 1.200 7.700.3L22 25.500c-2.800 1-5 .8-7.600-.4z" fill="#fbc72f" />
          </Svg>
        </button>
        <button type="button" aria-label="Проводник" className={active + 'bg-linear-to-b from-[#8b94ad] to-[#3a4560]'}>
          <Svg s={32} vb="0 0 32 32">
            <path d="M3 4h10l2 2h14v21H3z" fill="#e9cf6d" stroke="#a98e35" />
            <path d="M6 5h4v4H6z" fill="#4a9a46" />
            <path d="M13 5h4v4h-4z" fill="#c95a3f" />
            <path d="M2 9h28v18H2z" fill="#f6e59b" stroke="#cdb35a" />
            <path d="M8 30v-7c0-3 2-4 4-4h8c2 0 4 1 4 4v7h-4v-6h-8v6z" fill="#7cc3e6" stroke="#4b93bd" />
          </Svg>
        </button>
        <button type="button" aria-label="Проигрыватель" className={task}>
          <Svg s={26} vb="0 0 26 26">
            <path d="M6 2h19v22H6z" fill="#5b97c4" />
            <path d="M3 3h18v20H3z" fill="#86bfe2" stroke="#d4e9f5" />
            <circle cx="11.500" cy="13" r="8" fill="#ee7220" stroke="#fbd0a0" />
            <path d="M9 8.500v9l7-4.500z" fill="#fff" />
          </Svg>
        </button>
        <button type="button" aria-label="Редактор" className={task}>
          <Svg s={30} vb="0 0 30 30">
            <rect x="1" y="1" width="28" height="28" rx="2" fill="#47484a" />
            <path d="M22 6v5.500l-9 3 9 3V23L7.500 27v-5.500l9.500-3-9.500-3V10z" fill="#f7941e" />
            <path d="m7.500 15.500 9.500 3 5-1-9-3z" fill="#c76c10" />
          </Svg>
        </button>
        <button type="button" aria-label="Chrome" className={task}>
          <Svg s={28} vb="0 0 28 28">
            <circle cx="14" cy="14" r="13" fill="#fcc934" />
            <path d="M14 14 2.700 7.500A13 13 0 0 1 25.300 7.500H14z" fill="#e33b2e" />
            <path d="M14 14 2.700 7.500A13 13 0 0 0 13 27l6.500-10.500z" fill="#2ba24c" />
            <circle cx="14" cy="14" r="6.500" fill="#fff" />
            <circle cx="14" cy="14" r="5" fill="#4286f4" />
          </Svg>
        </button>
        <button type="button" aria-label="Помощник" className={task}>
          <Svg s={30} vb="0 0 30 30">
            <path d="M4 6 12 2l12 3 2 8-4 3H6z" fill="#dfe2e4" stroke="#8b9196" />
            <path d="M2 17 7 12h17l4 8-5 7H8l-6-4z" fill="#c1c6ca" stroke="#70777d" />
            <circle cx="18" cy="17" r="6" fill="#555c62" stroke="#e8eaec" strokeWidth="2" />
            <circle cx="18" cy="17" r="2.500" fill="#d5dadd" />
            <path d="M4 19h6M6 23h5M9 7h4M16 6h5" stroke="#4a5157" strokeWidth="2" />
          </Svg>
        </button>
        <button type="button" aria-label="Браузер" className={task}>
          <Svg s={29} vb="0 0 29 29">
            <circle cx="14.500" cy="14.500" r="14" fill="#f7f7f8" />
            <path d="m8.500 6 6 9.500 6-9.500M14.500 15v9" stroke="#d8232a" strokeWidth="3.400" />
          </Svg>
        </button>
        <div className="flex items-center gap-1 pl-1">
          <button type="button" aria-label="Word" className={active + 'border-r-4 bg-linear-to-b from-[#8291b8] to-[#33446f]'}>
            <Svg s={28} vb="0 0 28 28">
              <path d="M14 4h12v20H14z" fill="#fff" stroke="#2b579a" />
              <path d="M17 8h7M17 11.500h7M17 15h7M17 18.500h7" stroke="#2b579a" strokeWidth="1.500" />
              <path d="M1 4 17 1v26L1 24z" fill="#2b579a" />
              <path d="m4 9.500 2 9 3-8 3 8 2-9" stroke="#fff" strokeWidth="1.800" />
            </Svg>
          </button>
          <button type="button" aria-label="Camtasia" className={active + 'bg-linear-to-b from-[#7585b4] to-[#2c3d75]'}>
            <Svg s={28} vb="0 0 30 30">
              <path d="M2 4 25 2l3 21-20 5z" fill="#a9c864" stroke="#6f9437" />
              <path d="m5 16 20-8 2 14-18 5z" fill="#8bb14c" />
              <path d="M6 8c6 1 12 0 18-4" stroke="#d7e8a6" strokeWidth="2" />
            </Svg>
          </button>
          <button type="button" aria-label="Запись" className={active + 'bg-linear-to-b from-[#7b87b4] to-[#2c3a6c]'}>
            <Svg s={30} vb="0 0 30 30">
              <path d="M15 10h12v11H15z" fill="#6f9a32" stroke="#33481a" />
              <circle cx="12" cy="6" r="4.500" fill="#23262a" stroke="#555b61" />
              <path d="M7 8h9v13H8z" fill="#1b1d20" />
              <path d="M9 20h6l-1 9h-4z" fill="#2a2d31" />
              <circle cx="12" cy="6" r="1.800" fill="#8b9299" />
            </Svg>
          </button>
          <button type="button" aria-label="1С" className={active + 'bg-linear-to-b from-[#c8d0e6] to-[#7f8db8]'}>
            <Svg s={28} vb="0 0 28 28">
              <circle cx="14" cy="14" r="13" fill="#f8c52c" />
              <ellipse cx="14" cy="8" rx="10" ry="6" fill="#fde27a" />
              <path d="M4.500 12 8 9.500V20" stroke="#d2232a" strokeWidth="2.600" />
              <path d="M19.500 11.500a4.500 4.500 0 1 0-3 7.500H25M17.500 13a2 2 0 1 0-1.500 3.200h9" stroke="#d2232a" strokeWidth="1.700" />
            </Svg>
          </button>
        </div>
        <div className="ml-auto flex h-full items-center font-['Open_Sans','Noto_Sans',sans-serif] text-[11px] text-white">
          <span className="mr-4">RU</span>
          <Svg s={8} vb="0 0 8 8">
            <path d="M0 6h8L4 1.500z" fill="#fff" />
          </Svg>
          <span className="ml-3 flex items-center gap-[7px]">
            <Svg s={15}>
              <circle cx="8" cy="8" r="7" fill="#f3de36" stroke="#4b9b2e" />
              <path d="M8 4v8M4 8h8" stroke="#2e8f32" strokeWidth="3" />
            </Svg>
            <Svg s={15}>
              <path d="M2.500 3.500h7v11h-7zM4.500 1.500h3v2h-3z" stroke="#fff" strokeWidth="1.500" />
              <path d="M11.500 3v4M9 7h5v3l-2 1v3" stroke="#fff" strokeWidth="1.500" />
            </Svg>
            <Svg s={15}>
              <path d="M2 14v-2M5 14v-4M8 14V7.500M11 14V5M14 14V2" stroke="#fff" strokeWidth="1.800" />
            </Svg>
            <Svg s={15}>
              <path d="M3 5.500h3L10 2v12l-4-3.500H3z" fill="#fff" />
            </Svg>
          </span>
          <time className="ml-2.5 flex w-[60px] flex-col items-center leading-[15px]">
            <span>18:07</span>
            <span>12.02.2019</span>
          </time>
          <span className="ml-2 h-full w-3 border-l border-[#5a6478] bg-white/10" />
        </div>
      </div>
    </footer>
  );
}

export default function App() {
  return (
    <div className="relative flex h-screen w-full flex-col overflow-hidden bg-[#f5efdc] font-['Liberation_Sans',Arial,sans-serif] text-[11px] leading-[14px]">
      <div className="flex h-[21px] shrink-0 items-center overflow-hidden border-b-2 border-[#706c66] bg-[radial-gradient(circle_at_50%_20%,#18489a_0px,#06080f_14px)] pl-px">
        <Svg s={14} vb="0 0 14 14">
          <rect width="14" height="14" rx="1" fill="#e9d43c" />
          <path d="M2 2h3v4H2zM2 11h10M8 7v4M11 7v4" stroke="#6d5c10" strokeWidth="1.300" />
        </Svg>
        <h1 className="ml-[5px] bg-linear-to-r from-[#a6a5b0] via-[#b5b5b8] to-[#77777f] pr-1 font-['Open_Sans','Noto_Sans',sans-serif] text-[11px] leading-[19px] whitespace-nowrap text-black shadow-[0_0_8px_4px_#6a6a76]">
          Конфигуратор - ООсО "Ош мебель"
        </h1>
        <div className="ml-auto flex h-full items-start">
          <div className="mr-1 flex h-[17px] overflow-hidden rounded-b-[4px] border border-t-0 border-[#2c313c] bg-[#0c0f18]">
            <button type="button" aria-label="Свернуть программу" className="flex w-6 items-end justify-center pb-1">
              <span className="h-[3px] w-2.5 bg-[#e6e6e6]" />
            </button>
            <button type="button" aria-label="Восстановить" className="flex w-6 items-center justify-center border-x border-[#2c313c]">
              <Svg s={11} vb="0 0 11 11">
                <path d="M3.500 1h6.500v6H8M1 4h6.500v6H1z" stroke="#e6e6e6" strokeWidth="1.600" />
              </Svg>
            </button>
            <button type="button" aria-label="Закрыть программу" className="flex w-11 items-center justify-center">
              <Cross c="#f0f0f0" s={9} w={2.4} />
            </button>
          </div>
        </div>
      </div>
      <Bars />
      <main className="flex min-h-0 flex-1">
        <LeftPanel />
        <div className="relative mr-1.5 ml-1 min-w-0 flex-1 overflow-hidden border-t-2 border-l-2 border-[#8d887c] bg-[#d5cfba]">
          <CatalogWindow />
        </div>
        <RightPanel />
      </main>
      <div className="flex h-[23px] shrink-0 items-center">
        <button type="button" className="flex h-[18px] w-[161px] items-center gap-[3px] border border-[#b7a878] bg-[#acc6e6] pl-[3px] text-[#3f4450]">
          <Icon n="catalog" s={12} />
          Справочник Номенклатура
        </button>
      </div>
      <div className="flex h-[19px] shrink-0 items-center border-t border-[#e0d8bc] text-[#4a3c10]">
        <span className="flex-1 pl-1">Запуск приложения для отладки</span>
        <span className="w-8 border-l border-[#ddd5b8] text-center text-[#a29b84]">CAP</span>
        <span className="mx-0.5 w-8 border-x border-[#ddd5b8] text-center">NUM</span>
        <button type="button" className="flex w-6 items-center justify-center gap-0.5">
          ru <Down s={5} />
        </button>
      </div>
      <Taskbar />
      <ReorgDialog />
      <svg className="absolute top-[365px] left-[518px]" width="13" height="20" viewBox="0 0 13 20" aria-hidden="true">
        <path d="M.7 1v15l3.500-3.200 2.600 5.700 2.500-1.100-2.600-5.600h4.800z" fill="#fff" stroke="#23233a" />
      </svg>
    </div>
  );
}
